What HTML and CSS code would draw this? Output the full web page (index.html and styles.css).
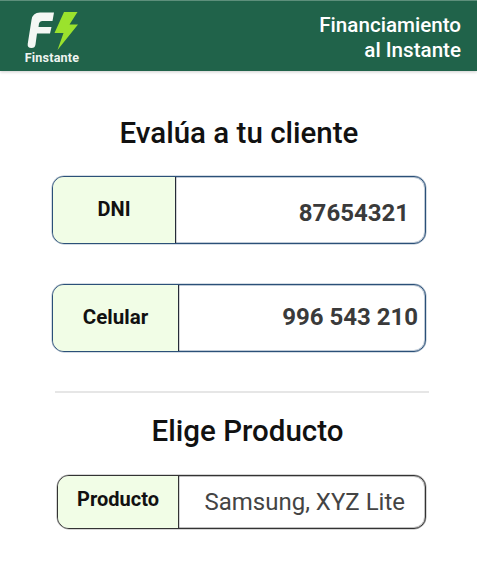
FILE: index.html
```html
<!DOCTYPE html>
<html lang="es">
<head>
<meta charset="utf-8">
<title>Finstante</title>
<link rel="stylesheet" href="styles.css">
</head>
<body>
<header class="topbar">
  <div class="logo">
    <svg class="logo-mark" viewBox="0 0 60 44" width="60" height="44">
      <path d="M5.700 36 L9.500 12 Q10.500 4.500 18 4.500 L32 4.500 L30.500 13 L20 13 Q17.500 13 17 15.500 L16.500 19 L29.500 19 L28 25.500 L15 25.500 L13.500 36.500 Q13 40 9.500 40 Q5.200 40 5.700 36 Z" fill="#f4f7f4"/>
      <path d="M55.500 4 L42 4 L32.500 25 L41.500 25 L35.500 42 L56 16.500 L47.500 16.500 Z" fill="#9be22d"/>
    </svg>
    <span class="logo-name">Finstante</span>
  </div>
  <div class="tagline">Financiamiento<br>al Instante</div>
</header>
<main class="content">
  <h1 class="title">Evalúa a tu cliente</h1>
  <div class="field field-dni">
    <div class="field-label">DNI</div>
    <div class="field-value">87654321</div>
  </div>
  <div class="field field-cel">
    <div class="field-label">Celular</div>
    <div class="field-value">996 543 210</div>
  </div>
  <hr class="divider">
  <h2 class="title title-product">Elige Producto</h2>
  <div class="field field-prod">
    <div class="field-label">Producto</div>
    <div class="field-value">Samsung, XYZ Lite</div>
  </div>
</main>
</body>
</html>
```
FILE: styles.css
```css
* { box-sizing: border-box; }
html, body { margin: 0; padding: 0; }
body {
  width: 477px;
  height: 574px;
  overflow: hidden;
  background: #fff;
  font-family: Roboto, "Liberation Sans", sans-serif;
  color: #111;
}
.topbar {
  height: 71px;
  background: #20634a;
  border-top: 1px solid #5d8f7b;
  box-shadow: 0 1px 3px rgba(0, 0, 0, .2);
  padding: 7px 16px 0 22px;
  display: flex;
  justify-content: space-between;
  align-items: flex-start;
}
.logo {
  width: 60px;
  display: flex;
  flex-direction: column;
  align-items: center;
}
.logo-mark { display: block; }
.logo-name {
  margin-top: -1px;
  font-size: 12.6px;
  font-weight: 700;
  line-height: 13px;
  color: #eef4f0;
  letter-spacing: .2px;
}
.tagline {
  margin-top: 5px;
  text-align: right;
  color: #fff;
  font-size: 20.6px;
  font-weight: 500;
  line-height: 24.500px;
}
.content {
  padding: 0 49px 0 52px;
  display: flex;
  flex-direction: column;
}
.title {
  margin: 44px 0 0;
  text-align: center;
  font-size: 29.5px;
  font-weight: 500;
  line-height: 36px;
  color: #111;
  width: 374px;
}
.field {
  display: flex;
  width: 374px;
  height: 68px;
  border: 1px solid #2b5078;
  box-shadow: 0 0 0 1px rgba(43, 80, 120, .3) inset, 0 0 0 .5px rgba(43, 80, 120, .4);
  border-radius: 12px;
  overflow: hidden;
  background: #fff;
}
.field-dni { margin-top: 25px; }
.field-cel { margin-top: 40px; }
.field-label {
  flex: none;
  width: 123px;
  background: #f1fde6;
  border-right: 1px solid #262b38;
  box-shadow: .5px 0 0 rgba(38, 43, 56, .4);
  display: flex;
  align-items: center;
  justify-content: center;
  padding-bottom: 2px;
  font-size: 20px;
  font-weight: 700;
  color: #111;
}
.field-value {
  flex: 1;
  display: flex;
  align-items: center;
  justify-content: flex-end;
  padding-top: 5px;
  padding-right: 16px;
  font-size: 24px;
  font-weight: 700;
  color: #3a3a3a;
}
.field-cel .field-label { width: 126px; padding-bottom: 2px; font-size: 20.5px; }
.field-cel .field-value { padding-top: 0; padding-bottom: 2px; padding-right: 7px; }
.divider {
  width: 374px;
  height: 2px;
  margin: 39px 0 0 3px;
  border: 0;
  background: #e6e6e6;
}
.title.title-product {
  margin: 20px 0 0 8.500px;
}
.field-prod {
  margin: 26px 0 0 5px;
  width: 369px;
  height: 54px;
  border-color: #333;
  box-shadow: 0 0 0 1px rgba(50, 50, 50, .3) inset, 0 0 0 .5px rgba(50, 50, 50, .4);
}
.field-prod .field-label {
  width: 121px;
  padding-bottom: 6px;
  border-right-color: #333;
}
.field-prod .field-value {
  padding-top: 0;
  padding-right: 20px;
  font-size: 24px;
  font-weight: 400;
  color: #444;
}
```
